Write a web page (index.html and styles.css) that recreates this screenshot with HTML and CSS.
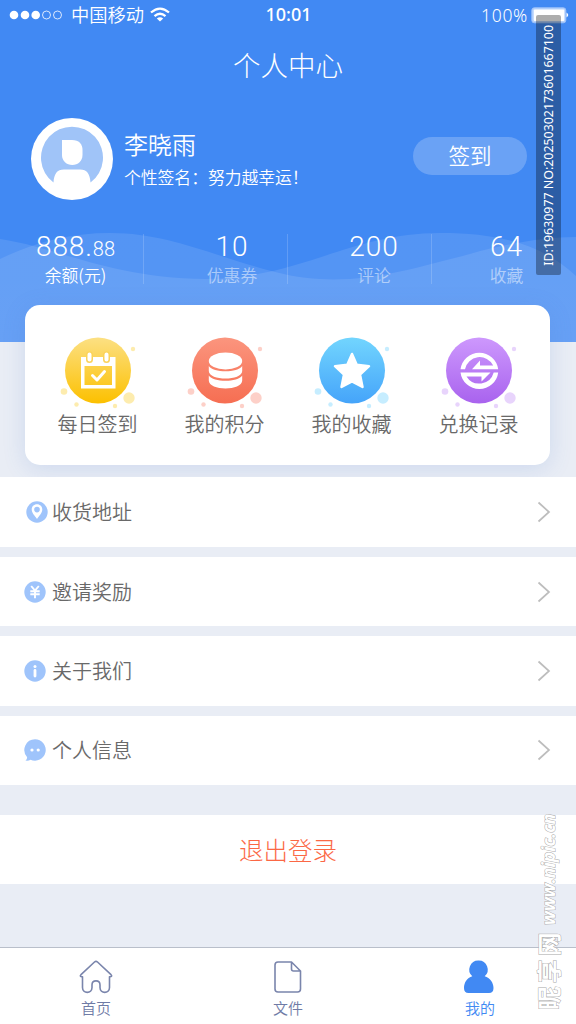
FILE: index.html
```html
<!DOCTYPE html>
<html lang="zh-CN">
<head>
<meta charset="utf-8">
<title>个人中心</title>
<link rel="stylesheet" href="styles.css">
</head>
<body>
<div class="screen">
  <header class="hero">
    <svg class="waves" viewBox="0 0 576 342" width="576" height="342">
      <defs>
        <linearGradient id="wave" x1="0" y1="233" x2="0" y2="342" gradientUnits="userSpaceOnUse">
          <stop offset="0" stop-color="#fff" stop-opacity=".1"/>
          <stop offset="1" stop-color="#fff" stop-opacity=".105"/>
        </linearGradient>
      </defs>
      <path fill="url(#wave)" d="M0 259C35 242 72 233 110 233C170 233 215 257 275 272C345 290 400 272 470 254C510 243 545 237 576 237V342H0Z"/>
      <path fill="url(#wave)" d="M0 239C60 248 110 278 205 279C300 279 350 233 440 233C505 233 545 247 576 276V342H0Z"/>
    </svg>
    <div class="status">
      <div class="status-left">
        <svg width="54" height="12" viewBox="0 0 54 12"><g fill="#fff"><circle cx="6" cy="6" r="4.3"/><circle cx="17" cy="6" r="4.3"/><circle cx="27.700" cy="6" r="4.300"/></g><g fill="none" stroke="#fff" stroke-width=".8"><circle cx="38.500" cy="6" r="4"/><circle cx="49.500" cy="6" r="4"/></g></svg>
        <span class="carrier">中国移动</span>
        <svg width="20" height="16" viewBox="0 0 20 16" fill="none" stroke="#fff" stroke-width="2.300"><path d="M1 5.500Q10-2.300 19 5.500"/><path d="M4.500 9.200Q10 4.400 15.500 9.200"/><path fill="#fff" stroke="none" d="M6.800 11.500Q10 9 13.200 11.500L10 14.600Z"/></svg>
      </div>
      <span class="clock">10:01</span>
      <div class="status-right">
        <span class="percent">100%</span>
        <svg width="38" height="17" viewBox="0 0 38 17"><rect x=".8" y=".8" width="34" height="15" rx="2.500" fill="#b9d3fb" stroke="#9cc1fa"/><rect x="2.800" y="2.500" width="30.500" height="11.500" rx="1" fill="#fff"/><path d="M35.500 5.500Q39 8 35.500 10.500Z" fill="#fff"/></svg>
      </div>
    </div>
    <h1 class="title">个人中心</h1>
    <div class="profile">
      <svg class="avatar" width="82" height="82" viewBox="0 0 82 82"><circle cx="41" cy="41" r="41" fill="#fff"/><path fill="#a0c4f8" d="M22.500 64.500A31 31 0 1 1 59.500 64.500C59 56 56 51.500 49 51.500H33C26 51.500 23 56 22.500 64.500Z"/><path fill="#fff" d="M31 22H41C48 22 51.500 26 51.500 32V37C51.500 43 47 47 41.300 47S31 43 31 37Z"/></svg>
      <div class="who">
        <div class="name">李晓雨</div>
        <div class="sign">个性签名：努力越幸运！</div>
      </div>
      <button class="checkin">签到</button>
    </div>
    <div class="stats">
      <div class="stat s1"><div class="num">888.<small>88</small></div><div class="lab">余额(元)</div></div>
      <div class="stat s2"><div class="num">10</div><div class="lab">优惠券</div></div>
      <div class="stat s3"><div class="num">200</div><div class="lab">评论</div></div>
      <div class="stat s4"><div class="num">64</div><div class="lab">收藏</div></div>
    </div>
  </header>

  <section class="card">
    <div class="entry yellow">
      <svg width="86" height="72" viewBox="0 0 86 72">
        <defs><linearGradient id="gy" x1="0" y1="0" x2="0" y2="1"><stop stop-color="#fce083"/><stop offset="1" stop-color="#fcc000"/></linearGradient></defs>
        <g class="dots"><circle cx="78" cy="12" r="2.200"/><circle cx="9" cy="54.500" r="3.300"/><circle cx="21.500" cy="67.500" r="2.200"/><circle cx="60" cy="69" r="2.200"/><circle cx="74" cy="61" r="5.700"/></g>
        <circle cx="43" cy="33.500" r="33" fill="url(#gy)"/>
        <path fill="#fff" fill-rule="evenodd" d="M26 20H60.500V51.500H26ZM29.500 29V48H57V29Z"/>
        <g stroke-linecap="round" fill="none"><path stroke="#fbd258" stroke-width="7" d="M34.500 18V22.500M51.500 18V22.500"/><path stroke="#fff" stroke-width="4" d="M34.500 17.500V22.500M51.500 17.500V22.500"/><path stroke="#fff" stroke-width="3" stroke-linejoin="round" d="M37.500 38.500L42 43L49.500 34.500"/></g>
      </svg>
      <span>每日签到</span>
    </div>
    <div class="entry red">
      <svg width="86" height="72" viewBox="0 0 86 72">
        <defs><linearGradient id="gr" x1="0" y1="0" x2="0" y2="1"><stop stop-color="#fb957e"/><stop offset="1" stop-color="#f66e52"/></linearGradient></defs>
        <g class="dots"><circle cx="78" cy="12" r="2.200"/><circle cx="9" cy="54.500" r="3.300"/><circle cx="21.500" cy="67.500" r="2.200"/><circle cx="60" cy="69" r="2.200"/><circle cx="74" cy="61" r="5.700"/></g>
        <circle cx="43" cy="33.500" r="33" fill="url(#gr)"/>
        <g fill="#fff"><ellipse cx="43.500" cy="24" rx="16.700" ry="8.500"/><path d="M26.800 29C31 36 56 36 60.200 29V34C60.200 44 26.800 44 26.800 34Z"/><path d="M26.800 38.500C31 45.500 56 45.500 60.200 38.500V43.500C60.200 54 26.800 54 26.800 43.500Z"/></g>
      </svg>
      <span>我的积分</span>
    </div>
    <div class="entry blue">
      <svg width="86" height="72" viewBox="0 0 86 72">
        <defs><linearGradient id="gb" x1="0" y1="0" x2="0" y2="1"><stop stop-color="#72d5fe"/><stop offset="1" stop-color="#45a4fa"/></linearGradient></defs>
        <g class="dots"><circle cx="78" cy="12" r="2.200"/><circle cx="9" cy="54.500" r="3.300"/><circle cx="21.500" cy="67.500" r="2.200"/><circle cx="60" cy="69" r="2.200"/><circle cx="74" cy="61" r="5.700"/></g>
        <circle cx="43" cy="33.500" r="33" fill="url(#gb)"/>
        <path fill="#fff" stroke="#fff" stroke-width="2.500" stroke-linejoin="round" d="M43 17L47.700 27.700L60 29.200L51 37.500L53.500 50L43 44.300L32.500 50L35 37.500L26 29.200L38.300 27.700Z"/>
      </svg>
      <span>我的收藏</span>
    </div>
    <div class="entry purple">
      <svg width="86" height="72" viewBox="0 0 86 72">
        <defs><linearGradient id="gp" x1="0" y1="0" x2="0" y2="1"><stop stop-color="#cd98fd"/><stop offset="1" stop-color="#a963ee"/></linearGradient></defs>
        <g class="dots"><circle cx="78" cy="12" r="2.200"/><circle cx="9" cy="54.500" r="3.300"/><circle cx="21.500" cy="67.500" r="2.200"/><circle cx="60" cy="69" r="2.200"/><circle cx="74" cy="61" r="5.700"/></g>
        <circle cx="43" cy="33.500" r="33" fill="url(#gp)"/>
        <path fill="#fff" d="M24.500 32.300A19 19 0 0 1 62.200 32.300H36L44 23.500V28.500H57.200A15 15 0 0 0 29 32.300ZM62.200 35.500A19 19 0 0 1 24.500 35.500H54.500L45.500 44.500V39.500H30.500A15 15 0 0 0 57.700 35.500Z"/>
      </svg>
      <span>兑换记录</span>
    </div>
  </section>

  <nav class="list">
    <a class="row">
      <svg class="ico pin" width="22" height="22" viewBox="0 0 22 22"><circle cx="11" cy="11" r="10.700" fill="#9fc4fb"/><path fill="#fff" fill-rule="evenodd" d="M11 3.300C7.800 3.300 5.700 5.700 5.700 8.500C5.700 12 9 15 11 18C13 15 16.300 12 16.300 8.500C16.300 5.700 14.200 3.300 11 3.300ZM11 5.800A2.800 2.800 0 1 1 11 11.400A2.800 2.800 0 1 1 11 5.800Z"/></svg>
      <span>收货地址</span>
      <svg class="chev" width="14" height="22" viewBox="0 0 14 22"><path d="M1.500 1.500L12 11L1.500 20.500"/></svg>
    </a>
    <a class="row">
      <svg class="ico" width="22" height="22" viewBox="0 0 22 22"><circle cx="11" cy="11" r="10.700" fill="#9fc4fb"/><path fill="none" stroke="#fff" stroke-width="1.900" d="M7.200 5L11 9.500L14.800 5M6.300 10.200H15.700M6.300 13.300H15.700M11 9.500V17.300"/></svg>
      <span>邀请奖励</span>
      <svg class="chev" width="14" height="22" viewBox="0 0 14 22"><path d="M1.500 1.500L12 11L1.500 20.500"/></svg>
    </a>
    <a class="row">
      <svg class="ico" width="22" height="22" viewBox="0 0 22 22"><circle cx="11" cy="11" r="10.700" fill="#9fc4fb"/><circle cx="11" cy="6.500" r="1.500" fill="#fff"/><path d="M11 10.500V16" stroke="#fff" stroke-width="2.800" stroke-linecap="round"/></svg>
      <span>关于我们</span>
      <svg class="chev" width="14" height="22" viewBox="0 0 14 22"><path d="M1.500 1.500L12 11L1.500 20.500"/></svg>
    </a>
    <a class="row last">
      <svg class="ico" width="22" height="22" viewBox="0 0 22 22"><path fill="#9fc4fb" d="M11 .3A10.700 10.700 0 1 1 6.500 20.700Q4.500 22 1.500 21.500Q3.500 20 3 18A10.700 10.700 0 0 1 11 .3Z"/><circle cx="8" cy="11" r="1.600" fill="#fff"/><circle cx="14.200" cy="11" r="1.600" fill="#fff"/></svg>
      <span>个人信息</span>
      <svg class="chev" width="14" height="22" viewBox="0 0 14 22"><path d="M1.500 1.500L12 11L1.500 20.500"/></svg>
    </a>
  </nav>

  <button class="logout">退出登录</button>

  <footer class="tabs">
    <a class="tab">
      <svg width="34" height="34" viewBox="0 0 34 34" fill="none" stroke="#7a85ac" stroke-width="1.600" stroke-linecap="round" stroke-linejoin="round"><path d="M3.500 16.700C1.500 17 .8 16 2 14.700L15.500 2Q17 .7 18.500 2L32 14.700C33.200 16 32.500 17 30.500 16.700V27.500C30.500 34 21 34 21 27.500V25C21 19.500 13 19.500 13 25V27.500C13 34 3.500 34 3.500 27.500Z"/></svg>
      <span>首页</span>
    </a>
    <a class="tab">
      <svg width="34" height="34" viewBox="0 0 34 34" fill="none" stroke="#7a85ac" stroke-width="1.600" stroke-linejoin="round"><path d="M7 2H20.500L29.500 11V29Q29.500 32 26.500 32H7Q4 32 4 29V5Q4 2 7 2ZM20.500 2V9Q20.500 11 22.500 11H29.500"/></svg>
      <span>文件</span>
    </a>
    <a class="tab active">
      <svg width="34" height="34" viewBox="0 0 34 34"><path fill="#4189f3" d="M15.500.5A9 9 0 0 1 21.700 16.200C27 18 30.500 22.500 30.500 28C30.500 31.500 29 33 26 33H5.500C2.500 33 1 31.500 1 28C1 22.500 4 18 9.300 16.200A9 9 0 0 1 15.500.5Z"/></svg>
      <span>我的</span>
    </a>
  </footer>

  <div class="serial"><span>ID:19630977 NO:20250302173601667100</span></div>
  <div class="brand"><span class="cn">昵享网</span><span class="url">www.nipic.cn</span></div>
</div>
</body>
</html>
```
FILE: styles.css
```css
* { box-sizing: border-box; }
body {
  margin: 0;
  font-family: "Noto Sans CJK SC", "Noto Sans", sans-serif;
  font-weight: 350;
  color: #696969;
}
svg { display: block; flex: none; }
button { border: 0; padding: 0; font: inherit; }
.screen {
  position: relative;
  width: 576px;
  height: 1024px;
  overflow: hidden;
  display: flex;
  flex-direction: column;
  background: #e9edf5;
}

.hero {
  position: relative;
  height: 342px;
  flex: none;
  background: #4189f3;
  color: #fff;
}
.waves { position: absolute; left: 0; top: 0; }
.status, .title, .profile, .stats { position: relative; }
.status {
  display: grid;
  grid-template-columns: 1fr auto 1fr;
  align-items: center;
  height: 30px;
  padding: 0 7px 0 8px;
}
.status-left, .status-right { display: flex; align-items: center; }
.status-right { justify-content: flex-end; gap: 3px; }
.carrier { margin: 0 6px 0 9px; font-size: 18.3px; line-height: 28px; height: 30px; }
.clock { height: 30px; font: 500 18px/29px "Noto Sans", sans-serif; }
.percent { font: 300 17.5px/30px "Noto Sans", sans-serif; letter-spacing: .7px; }
.title {
  margin: 13px 0 0;
  height: 44px;
  font-size: 27.5px;
  font-weight: 300;
  line-height: 42px;
  text-align: center;
}
.profile {
  display: flex;
  align-items: center;
  height: 82px;
  margin-top: 31px;
  padding: 0 49px 0 31px;
}
.who { margin-left: 11px; flex: 1; white-space: nowrap; }
.name { font-size: 24px; line-height: 34px; margin-bottom: 2px; }
.sign { font-size: 16.8px; line-height: 28px; }
.checkin {
  width: 114px;
  height: 38px;
  margin-top: -6px;
  padding-bottom: 2px;
  border-radius: 19px;
  background: #6aa2f5;
  color: #fff;
  font-size: 21.5px;
  line-height: 36px;
}
.stats { display: grid; grid-template: 50px / repeat(4, 144px); margin-top: 34px; }
.stat { text-align: center; border-right: 1px solid rgba(255, 255, 255, .17); white-space: nowrap; }
.s1 { padding-left: 8px; }
.s2 { padding-left: 33px; }
.s3 { padding-left: 29px; }
.s4 { padding-left: 5px; border: 0; }
.num { height: 25px; font: 300 28px/25px Roboto, sans-serif; letter-spacing: .9px; }
.num small { font-size: 20px; line-height: 1; letter-spacing: 0; }
.lab { font-size: 16.8px; line-height: 32px; opacity: .5; }
.s1 .lab { opacity: 1; }

.card {
  position: relative;
  width: 525px;
  height: 160px;
  flex: none;
  margin: -37px 0 0 25px;
  padding: 32px 8px 0 9px;
  display: grid;
  grid-template-columns: repeat(4, 127px);
  border-radius: 15px;
  background: #fff;
  box-shadow: 0 4px 22px rgba(70, 120, 205, .17);
}
.entry { display: flex; flex-direction: column; align-items: center; font-size: 20px; line-height: 30px; }
.entry svg { margin: -.5px 0 .5px; }
.yellow .dots { fill: #fdecae; }
.red .dots { fill: #fdd0c8; }
.blue .dots { fill: #c6edff; }
.purple .dots { fill: #e8d4fc; }

.list { position: relative; display: grid; grid-auto-rows: 69.5px; gap: 10px; margin-top: 12px; }
.row { display: flex; align-items: center; padding: 1px 25px 0 24px; background: #fff; font-size: 20px; }
.row.last { padding-top: 0; }
.row span { flex: 1; margin-left: 6px; line-height: 30px; }
.pin { margin: 0 -1.5px 0 1.5px; }
.chev { fill: none; stroke: #bdbdbd; stroke-width: 1.7; }
.logout {
  margin-top: 30px;
  height: 69px;
  flex: none;
  background: #fff;
  color: #fb6845;
  font-size: 24.5px;
  font-weight: 300;
  line-height: 69px;
}
.tabs {
  display: grid;
  grid-template-columns: repeat(3, 192px);
  height: 77px;
  margin-top: auto;
  padding-top: 12px;
  border-top: 1px solid #b9bfca;
  background: #fff;
}
.tab { display: flex; flex-direction: column; align-items: center; gap: 3px; font-size: 15px; line-height: 22px; color: #6f7ba6; }
.active { color: #4189f3; }

/* Overlays along the right edge */
.serial {
  position: absolute;
  left: 536px;
  top: 15px;
  width: 25px;
  height: 260px;
  display: flex;
  align-items: center;
  justify-content: center;
  border-radius: 2px;
  background: rgba(0, 0, 0, .32);
}
.serial span {
  writing-mode: vertical-rl;
  transform: rotate(180deg);
  font: 400 12.4px/20px "Noto Sans", sans-serif;
  white-space: nowrap;
  color: #fff;
}
.brand {
  position: absolute;
  left: 530px;
  top: 808px;
  width: 36px;
  height: 202px;
  display: flex;
  align-items: center;
  gap: 4px;
  writing-mode: vertical-rl;
  transform: rotate(180deg);
  white-space: nowrap;
  font-weight: 700;
  color: #fff;
  -webkit-text-stroke: 1px #a9a9a9;
  paint-order: stroke;
}
.brand span { line-height: 36px; text-orientation: sideways; }
.url { font-family: "Open Sans", sans-serif; font-style: italic; font-size: 17.5px; letter-spacing: .1px; }
.cn { font-size: 23.5px; letter-spacing: 3.5px; }
```
